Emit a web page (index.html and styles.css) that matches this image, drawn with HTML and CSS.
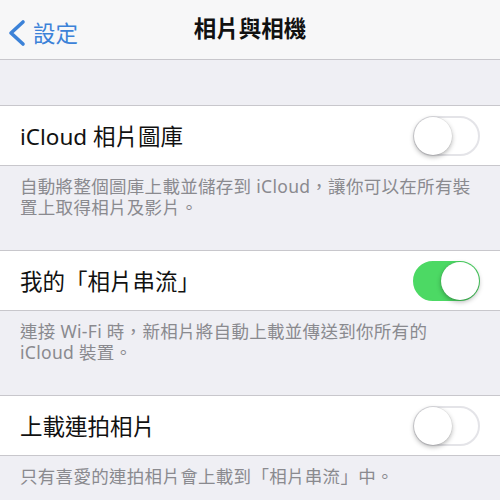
FILE: index.html
```html
<!DOCTYPE html>
<html lang="zh-Hant">
<head>
    <meta charset="UTF-8">
    <meta name="viewport" content="width=device-width, initial-scale=1.0">
    <title>相片與相機</title>
    <link rel="stylesheet" href="styles.css">
</head>
<body>
    <div class="nav-bar">
        <a class="back" href="#">
            <svg class="chevron" width="22" height="28" viewBox="0 0 22 28">
                <path d="M17 3 L5 14 L17 25" fill="none" stroke="#3c82d8" stroke-width="3.6" stroke-linecap="round" stroke-linejoin="round"/>
            </svg>
            <span>設定</span>
        </a>
        <h1 class="title">相片與相機</h1>
    </div>

    <div class="top-gap"></div>

    <div class="group">
        <div class="row">
            <span class="label">iCloud 相片圖庫</span>
            <span class="switch"></span>
        </div>
    </div>
    <p class="footer">自動將整個圖庫上載並儲存到 iCloud，讓你可以在所有裝<br>置上取得相片及影片。</p>

    <div class="group">
        <div class="row">
            <span class="label">我的「相片串流」</span>
            <span class="switch on"></span>
        </div>
    </div>
    <p class="footer">連接 Wi-Fi 時，新相片將自動上載並傳送到你所有的<br>iCloud 裝置。</p>

    <div class="group">
        <div class="row">
            <span class="label">上載連拍相片</span>
            <span class="switch"></span>
        </div>
    </div>
    <p class="footer">只有喜愛的連拍相片會上載到「相片串流」中。</p>
</body>
</html>
```

FILE: styles.css
```css
body {
    margin: 0;
    background-color: #efeff4;
    font-family: "Noto Sans", "Noto Sans CJK TC", sans-serif;
    color: #111;
}

.nav-bar {
    position: relative;
    height: 59px;
    background-color: #f7f7f8;
    border-bottom: 1px solid #c8c7cc;
    display: flex;
    align-items: center;
    justify-content: center;
}

    .nav-bar .back {
        position: absolute;
        left: 6px;
        top: 16px;
        display: flex;
        align-items: center;
        color: #3c82d8;
        text-decoration: none;
        font-size: 22.5px;
    }

    .nav-bar .chevron {
        margin-right: 5px;
    }

    .nav-bar .title {
        margin: 0;
        font-size: 22.5px;
        font-weight: 600;
        line-height: 1;
    }

.top-gap {
    height: 45px;
}

.group {
    background-color: #fff;
    border-top: 1px solid #c8c7cc;
    border-bottom: 1px solid #c8c7cc;
}

.row {
    height: 59px;
    display: flex;
    align-items: center;
    justify-content: space-between;
    padding: 0 20px;
}

    .row .label {
        font-size: 22.5px;
    }

.switch {
    position: relative;
    width: 67px;
    height: 40px;
    box-sizing: border-box;
    border-radius: 20px;
    border: 2px solid #e4e4e8;
    background-color: #fff;
}

    .switch::after {
        content: "";
        position: absolute;
        left: -1px;
        top: -1px;
        width: 38px;
        height: 38px;
        border-radius: 50%;
        background-color: #fff;
        box-shadow: 0 2px 5px rgba(0, 0, 0, 0.3), 0 0 0 0.5px rgba(0, 0, 0, 0.08);
    }

    .switch.on {
        background-color: #4cd964;
        border-color: #4cd964;
    }

        .switch.on::after {
            left: auto;
            right: -1px;
        }

.footer {
    margin: 0;
    padding: 10px 16px 32px 20px;
    font-size: 17.5px;
    line-height: 21px;
    letter-spacing: 0.3px;
    color: #8a8a8f;
}
```
